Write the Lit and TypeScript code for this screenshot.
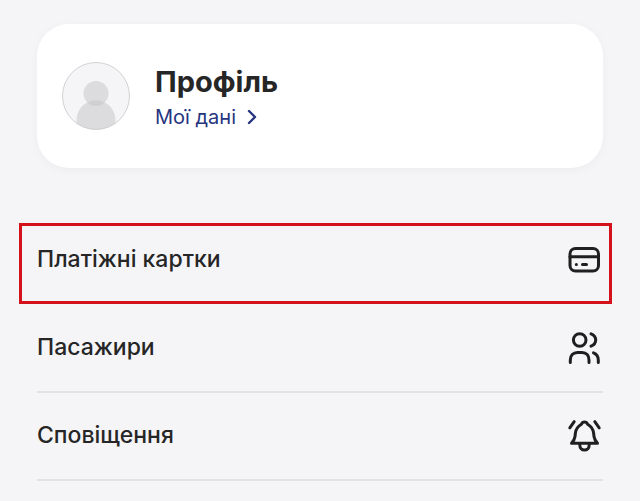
import { LitElement, html, css, svg, nothing } from "lit";
import { customElement } from "lit/decorators.js";

const cardIcon = svg`
  <rect x="5" y="7.5" width="28.5" height="22.5" rx="5.5"></rect>
  <path d="M5 15.8H33.5M11.3 23.5H11.4M17.5 23.5H21.5"></path>`;

const peopleIcon = svg`
  <circle cx="14.7" cy="11" r="6.3"></circle>
  <path d="M5.3 33.5V31C5.3 26.5 8 23.5 12.5 23.5H17C21.5 23.5 24 26.5 24 31V33.5"></path>
  <path d="M26 4.8C29 6 30.7 8.3 30.7 11S29 16 26 17.2"></path>
  <path d="M28.5 23.8C31.7 25 33.3 27.5 33.3 31V33.5"></path>`;

const bellIcon = svg`
  <path d="M6.5 26.3H32.5C30.7 24.3 29.3 22 29 19.5L28.6 16C28.2 12.5 26 9.2 22.6 7.2C22 5.7 21 4.9 19.5 4.9S17 5.7 16.4 7.2C13 9.2 10.8 12.5 10.4 16L10 19.5C9.7 22 8.3 24.3 6.5 26.3Z"></path>
  <path d="M14.8 27V28C14.8 31 16.7 33 19.5 33S24.2 31 24.2 28V27"></path>
  <path d="M4.8 10.9L9.2 4.7M34.2 10.9L29.8 4.7"></path>`;

const items = [
  { label: "Платіжні картки", icon: cardIcon, highlighted: true },
  { label: "Пасажири", icon: peopleIcon, highlighted: false },
  { label: "Сповіщення", icon: bellIcon, highlighted: false },
];

@customElement("app-root")
export class AppRoot extends LitElement {
  static styles = css`
    :host {
      display: block;
      box-sizing: border-box;
      min-height: 100vh;
      padding: 24px 37px 20px;
      background: #f5f5f7;
      color: #262626;
      font-family: Inter, "Liberation Sans", sans-serif;
    }
    .profile {
      display: flex;
      align-items: center;
      gap: 24px;
      padding: 36px 24px;
      border-radius: 32px;
      background: #fff;
      box-shadow: 0 2px 10px rgba(0, 0, 0, 0.04);
    }
    .avatar {
      display: block;
      flex: none;
      width: 70px;
      height: 70px;
    }
    .about {
      display: grid;
      gap: 2px;
      padding-top: 4px;
    }
    .title {
      margin: 0;
      font-size: 29px;
      line-height: 36px;
      font-weight: 700;
    }
    .link {
      display: flex;
      align-items: center;
      gap: 10px;
      font-size: 20px;
      line-height: 30px;
      color: #27357f;
      text-decoration: none;
    }
    .chevron {
      width: 12px;
      height: 16px;
      fill: none;
      stroke: currentColor;
      stroke-width: 2.4;
      stroke-linecap: round;
      stroke-linejoin: round;
    }
    .menu {
      list-style: none;
      margin: 49px 0 0;
      padding: 0;
    }
    .item {
      position: relative;
      border-bottom: 2px solid #e2e2e5;
    }
    .item.highlighted {
      border-bottom-color: transparent;
    }
    .row {
      display: flex;
      align-items: center;
      justify-content: space-between;
      width: 100%;
      padding: 24px 0;
      border: 0;
      background: none;
      color: inherit;
      font: inherit;
      font-size: 23px;
      font-weight: 500;
      line-height: 36px;
      text-align: left;
      cursor: pointer;
    }
    .label {
      padding-bottom: 2px;
    }
    .icon {
      flex: none;
      width: 38px;
      height: 38px;
      fill: none;
      stroke: #1f1f1f;
      stroke-width: 3;
      stroke-linecap: round;
      stroke-linejoin: round;
    }
    .frame {
      position: absolute;
      inset: 6px -9px -1px -18px;
      border: 3px solid #d3121c;
      pointer-events: none;
    }
  `;

  render() {
    return html`
      <section class="profile">
        <svg class="avatar" viewBox="0 0 70 70" aria-hidden="true">
          <defs>
            <clipPath id="disc"><circle cx="35" cy="35" r="33.5"></circle></clipPath>
          </defs>
          <circle cx="35" cy="35" r="33.5" fill="#f5f5f7" stroke="#d2d2d4"></circle>
          <g clip-path="url(#disc)" fill="#c6c7ca" fill-opacity="0.55">
            <circle cx="35" cy="32.5" r="12.5"></circle>
            <path d="M15.5 70V60C15.5 48 24 39.5 35 39.5S54.5 48 54.5 60V70Z"></path>
          </g>
        </svg>
        <div class="about">
          <h1 class="title">Профіль</h1>
          <a class="link" href="#data">
            Мої дані
            <svg class="chevron" viewBox="0 0 12 16" aria-hidden="true">
              <path d="M3 2L9 8L3 14"></path>
            </svg>
          </a>
        </div>
      </section>
      <ul class="menu">
        ${items.map(
          (item) => html`
            <li class="item ${item.highlighted ? "highlighted" : ""}">
              <button class="row" type="button">
                <span class="label">${item.label}</span>
                <svg class="icon" viewBox="0 0 38 38" aria-hidden="true">${item.icon}</svg>
              </button>
              ${item.highlighted ? html`<div class="frame"></div>` : nothing}
            </li>
          `
        )}
      </ul>
    `;
  }
}
